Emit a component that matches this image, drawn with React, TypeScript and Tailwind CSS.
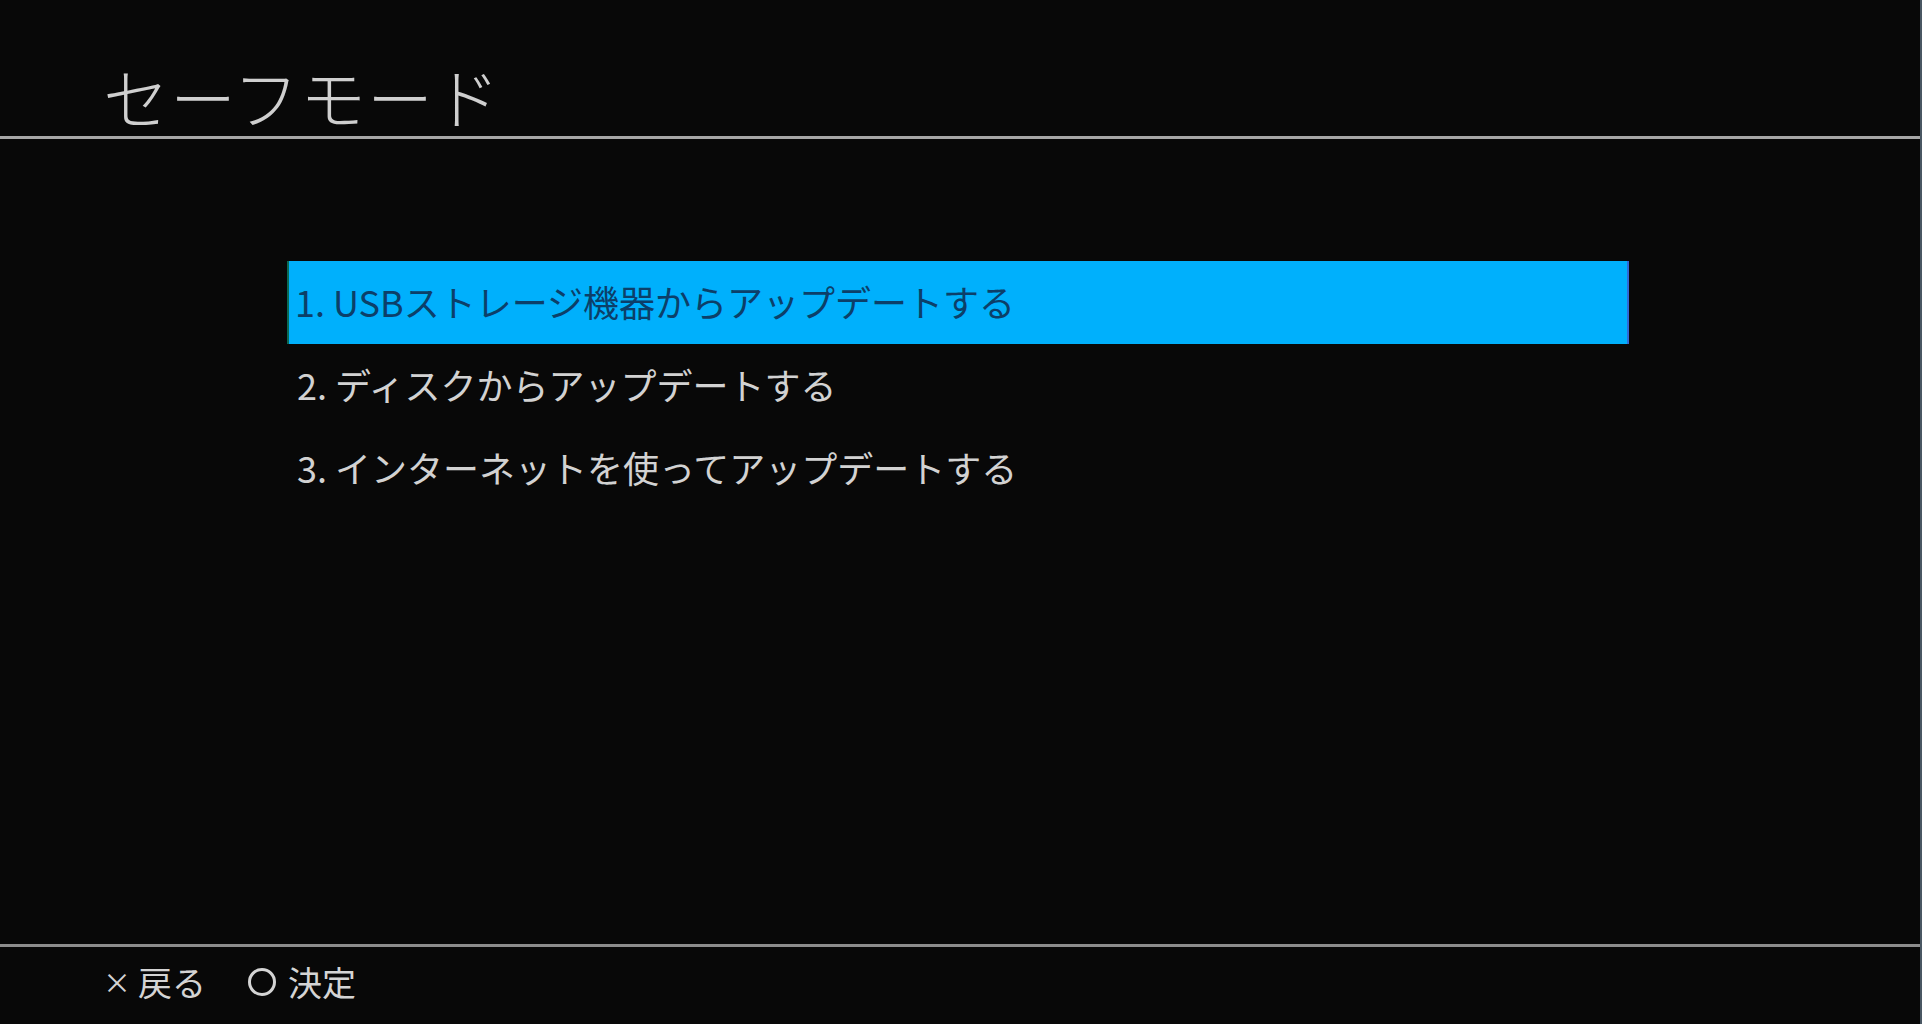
import React from 'react';

const items = [
  '1. USBストレージ機器からアップデートする',
  '2. ディスクからアップデートする',
  '3. インターネットを使ってアップデートする',
];

const App: React.FC = () => {
  const selected = 0;

  return (
    <div
      className="w-[1922px] h-[1024px] bg-[#080808] flex overflow-hidden"
      style={{ fontFamily: '"Noto Sans CJK JP", "Noto Sans", sans-serif' }}
    >
      <div className="flex-1 flex flex-col">
        {/* ヘッダー */}
        <div className="h-[136px] pl-[103px] pt-[62px] shrink-0">
          <h1 className="text-[66px] leading-[66px] font-light text-[#cfcfcf] tracking-[1px]">セーフモード</h1>
        </div>
        <div className="h-[3px] bg-[#a6a6a6] shrink-0" />

        {/* メニュー */}
        <div className="flex-1 pt-[122px] pl-[287px]">
          <ul className="w-[1342px] flex flex-col">
            {items.map((label, i) => (
              <li
                key={label}
                className={`h-[83px] flex items-center pb-[3px] text-[36px] leading-none ${
                  i === selected
                    ? 'pl-[6px] bg-[#00b0fc] text-[#0c3f69] border-l-2 border-[#0a6a55] border-r-2 border-r-[#2f6bd6]'
                    : 'pl-[10px] text-[#d2d2d2]'
                }`}
              >
                {label}
              </li>
            ))}
          </ul>
        </div>

        {/* フッター */}
        <div className="h-[3px] bg-[#8c8c8c] shrink-0" />
        <div className="h-[77px] shrink-0 flex items-center pl-[103px] pb-[8px] text-[34px] leading-none text-[#d4d4d4]">
          <span className="text-[28px] mr-[7px]">×</span>
          <span>戻る</span>
          <span className="ml-[42px] w-[28px] h-[28px] rounded-full border-[3px] border-[#d4d4d4]" />
          <span className="ml-[12px]">決定</span>
        </div>
      </div>
      <div className="w-[2px] bg-[#4a5763] shrink-0" />
    </div>
  );
};

export default App;
